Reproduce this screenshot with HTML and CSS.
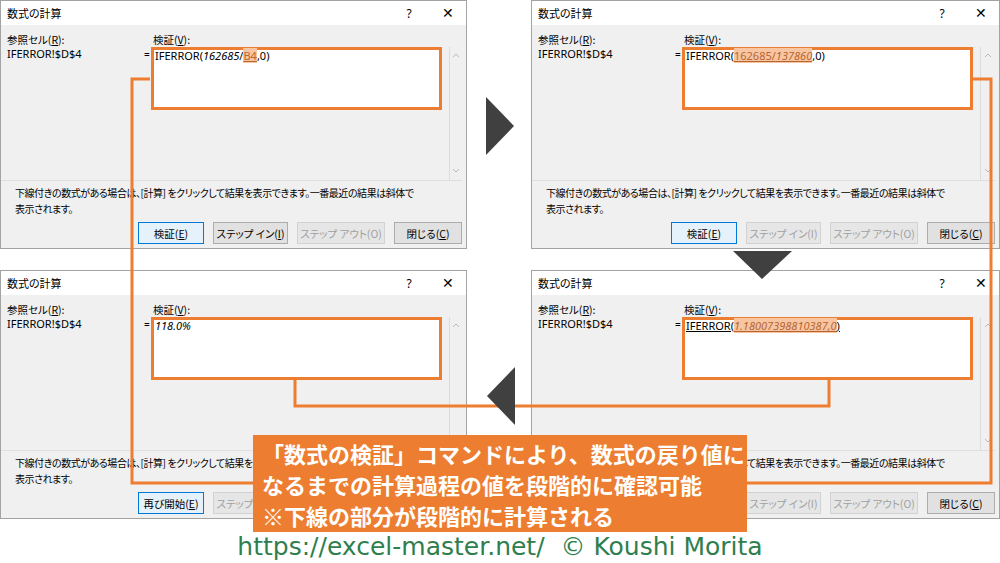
FILE: index.html
```html
<!DOCTYPE html>
<html>
  <head>
  <meta charset="utf-8">
  <link rel="stylesheet" href="styles.css">
  </head>
  <body>
  <div class="page">
    <div class="grid">

      <!-- step 1 -->
      <section class="dlg">
        <header class="bar"><span class="title">数式の計算</span><span class="help">?</span><span class="close">✕</span></header>
        <div class="main">
          <div class="lbl">参照セル(<u>R</u>):</div>
          <div class="lbl lbl-v">検証(<u>V</u>):</div>
          <div class="ref">IFERROR!$D$4</div>
          <div class="eq">=</div>
          <div class="field">IFERROR(<i>162685</i>/<span class="hl">B4</span>,0)</div>
          <div class="scroll">
            <svg width="8" height="5" viewBox="0 0 8 5"><polyline points="1,4 4,1 7,4" fill="none" stroke="#b9b9b9"/></svg>
            <svg width="8" height="5" viewBox="0 0 8 5"><polyline points="1,1 4,4 7,1" fill="none" stroke="#b9b9b9"/></svg>
          </div>
        </div>
        <p class="note">下線付きの数式がある場合は、[計算] をクリックして結果を表示できます。一番最近の結果は斜体で<br>表示されます。</p>
        <div class="btns">
          <button class="btn def w1">検証(<u>E</u>)</button>
          <button class="btn w2">ステップ イン(<u>I</u>)</button>
          <button class="btn off w3">ステップ アウト(O)</button>
          <button class="btn w4">閉じる(<u>C</u>)</button>
        </div>
      </section>

      <!-- step 2 -->
      <section class="dlg">
        <header class="bar"><span class="title">数式の計算</span><span class="help">?</span><span class="close">✕</span></header>
        <div class="main">
          <div class="lbl">参照セル(<u>R</u>):</div>
          <div class="lbl lbl-v">検証(<u>V</u>):</div>
          <div class="ref">IFERROR!$D$4</div>
          <div class="eq">=</div>
          <div class="field">IFERROR(<span class="hl">162685/<i>137860</i></span>,0)</div>
          <div class="scroll">
            <svg width="8" height="5" viewBox="0 0 8 5"><polyline points="1,4 4,1 7,4" fill="none" stroke="#b9b9b9"/></svg>
            <svg width="8" height="5" viewBox="0 0 8 5"><polyline points="1,1 4,4 7,1" fill="none" stroke="#b9b9b9"/></svg>
          </div>
        </div>
        <p class="note">下線付きの数式がある場合は、[計算] をクリックして結果を表示できます。一番最近の結果は斜体で<br>表示されます。</p>
        <div class="btns">
          <button class="btn def w1">検証(<u>E</u>)</button>
          <button class="btn off w2">ステップ イン(I)</button>
          <button class="btn off w3">ステップ アウト(O)</button>
          <button class="btn w4">閉じる(<u>C</u>)</button>
        </div>
      </section>

      <!-- step 4 (result) -->
      <section class="dlg">
        <header class="bar"><span class="title">数式の計算</span><span class="help">?</span><span class="close">✕</span></header>
        <div class="main">
          <div class="lbl">参照セル(<u>R</u>):</div>
          <div class="lbl lbl-v">検証(<u>V</u>):</div>
          <div class="ref">IFERROR!$D$4</div>
          <div class="eq">=</div>
          <div class="field"><i>118.0%</i></div>
          <div class="scroll">
            <svg width="8" height="5" viewBox="0 0 8 5"><polyline points="1,4 4,1 7,4" fill="none" stroke="#b9b9b9"/></svg>
            <svg width="8" height="5" viewBox="0 0 8 5"><polyline points="1,1 4,4 7,1" fill="none" stroke="#b9b9b9"/></svg>
          </div>
        </div>
        <p class="note">下線付きの数式がある場合は、[計算] をクリックして結果を表示できます。一番最近の結果は斜体で<br>表示されます。</p>
        <div class="btns">
          <button class="btn def w1">再び開始(<u>E</u>)</button>
          <button class="btn off w2">ステップ イン(I)</button>
          <button class="btn off w3">ステップ アウト(O)</button>
          <button class="btn w4">閉じる(<u>C</u>)</button>
        </div>
      </section>

      <!-- step 3 -->
      <section class="dlg">
        <header class="bar"><span class="title">数式の計算</span><span class="help">?</span><span class="close">✕</span></header>
        <div class="main">
          <div class="lbl">参照セル(<u>R</u>):</div>
          <div class="lbl lbl-v">検証(<u>V</u>):</div>
          <div class="ref">IFERROR!$D$4</div>
          <div class="eq">=</div>
          <div class="field"><u>IFERROR(<span class="hl"><i>1.18007398810387,0</i></span>)</u></div>
          <div class="scroll">
            <svg width="8" height="5" viewBox="0 0 8 5"><polyline points="1,4 4,1 7,4" fill="none" stroke="#b9b9b9"/></svg>
            <svg width="8" height="5" viewBox="0 0 8 5"><polyline points="1,1 4,4 7,1" fill="none" stroke="#b9b9b9"/></svg>
          </div>
        </div>
        <p class="note">下線付きの数式がある場合は、[計算] をクリックして結果を表示できます。一番最近の結果は斜体で<br>表示されます。</p>
        <div class="btns">
          <button class="btn def w1">検証(<u>E</u>)</button>
          <button class="btn off w2">ステップ イン(I)</button>
          <button class="btn off w3">ステップ アウト(O)</button>
          <button class="btn w4">閉じる(<u>C</u>)</button>
        </div>
      </section>

    </div>

    <!-- connectors and step arrows drawn over the dialogs -->
    <svg class="links" width="1000" height="563" viewBox="0 0 1000 563">
      <polyline points="150,79 132,79 132,483 991,483 991,79 972,79" fill="none" stroke="#ed7d31" stroke-width="3"/>
      <polyline points="295,380 295,406 829,406 829,380" fill="none" stroke="#ed7d31" stroke-width="3"/>
      <polygon points="486,97 514,126 486,155" fill="#404040"/>
      <polygon points="733,251 792,251 762,279" fill="#404040"/>
      <polygon points="487,396 515,367 515,425" fill="#404040"/>
    </svg>

    <div class="callout">「数式の検証」コマンドにより、数式の戻り値に<br>なるまでの計算過程の値を段階的に確認可能<br>※下線の部分が段階的に計算される</div>

    <p class="credit">https://excel-master.net/&nbsp; © Koushi Morita</p>
  </div>
  </body>
</html>
```

FILE: styles.css
```css
body {
  margin: 0;
  background-color: #fff;
  font-family: "Noto Sans CJK JP", sans-serif;
}
.page {
  position: relative;
  width: 1000px;
  height: 563px;
  overflow: hidden;
}
.grid {
  display: grid;
  grid-template-columns: 467px 469px;
  grid-template-rows: 249px 249px;
  column-gap: 64px;
  row-gap: 21px;
}

/* excel dialog */
.dlg {
  box-sizing: border-box;
  border: 1px solid #a3a3a3;
  background-color: #f0f0f0;
  display: flex;
  flex-direction: column;
  font-size: 10.5px;
  font-feature-settings: "palt";
  color: #000;
}
.bar {
  height: 24px;
  background-color: #fff;
  display: flex;
  align-items: center;
  padding-left: 6px;
}
.title {
  flex: 1;
  font-size: 11px;
}
.help {
  width: 14px;
  text-align: center;
  font-family: "Noto Sans", sans-serif;
  font-size: 12px;
}
.close {
  width: 36px;
  margin-left: 14px;
  text-align: center;
  font-size: 14px;
  font-family: "DejaVu Sans", sans-serif;
  font-weight: 300;
}
.main {
  display: grid;
  grid-template-columns: 137px 7px 291px 7px 1fr;
  grid-template-rows: 14px 63px 70px;
  padding: 8px 0 0 6px;
  border-bottom: 1px solid #dfdfdf;
  margin-right: 4px;
}
.lbl {
  grid-row: 1;
  grid-column: 1;
  line-height: 14px;
}
.lbl-v {
  grid-column: 3;
  padding-left: 2px;
}
.ref {
  grid-row: 2;
  grid-column: 1;
  font-family: "Noto Sans", sans-serif;
  font-size: 11px;
  line-height: 14px;
}
.eq {
  grid-row: 2;
  grid-column: 2;
  font-family: "Noto Sans", sans-serif;
  font-size: 10px;
  line-height: 14px;
}
.field {
  grid-row: 2;
  grid-column: 3;
  box-sizing: border-box;
  border: 3px solid #ed7d31;
  background-color: #fff;
  padding-left: 1px;
  font-family: "Noto Sans", sans-serif;
  font-size: 11px;
  line-height: 12px;
  white-space: nowrap;
}
.hl {
  background-color: #f7c5a2;
  color: #b8652f;
  text-decoration: underline;
}
.scroll {
  grid-row: 2 / 4;
  grid-column: 5;
  border-left: 1px solid #dcdcdc;
  display: flex;
  flex-direction: column;
  justify-content: space-between;
  align-items: center;
  padding: 6px 0 7px;
}
.note {
  margin: 4px 0 0 14px;
  line-height: 16px;
  font-size: 10px;
  letter-spacing: -0.45px;
  white-space: nowrap;
}
.btns {
  display: flex;
  justify-content: flex-end;
  gap: 9px;
  margin-top: 5px;
  padding-right: 4px;
}
.btn {
  height: 22px;
  box-sizing: border-box;
  border: 1px solid #adadad;
  background-color: #e1e1e1;
  font-family: "Noto Sans CJK JP", sans-serif;
  font-feature-settings: "palt";
  font-size: 10.5px;
  color: #000;
  padding: 0;
}
.btn.def {
  border-color: #0078d7;
  background-color: #e5f1fb;
}
.btn.off {
  color: #a0a0a0;
  border-color: #d2d2d2;
  background-color: #e6e6e6;
}
.w1 { width: 66px; }
.w2 { width: 75px; }
.w3 { width: 88px; }
.w4 { width: 68px; }

/* annotations */
.links {
  position: absolute;
  left: 0;
  top: 0;
  pointer-events: none;
}
.callout {
  position: absolute;
  left: 253px;
  top: 435px;
  width: 494px;
  height: 97px;
  box-sizing: border-box;
  padding: 3px 0 0 9px;
  background-color: #ed7d31;
  color: #fff;
  font-family: "Noto Sans CJK JP", sans-serif;
  font-weight: bold;
  font-size: 22px;
  line-height: 31px;
  white-space: nowrap;
}
.credit {
  position: absolute;
  left: 0;
  right: 0;
  top: 532px;
  margin: 0;
  text-align: center;
  color: #2f7f4e;
  font-family: "DejaVu Sans", sans-serif;
  font-size: 25px;
  line-height: 30px;
}
```
